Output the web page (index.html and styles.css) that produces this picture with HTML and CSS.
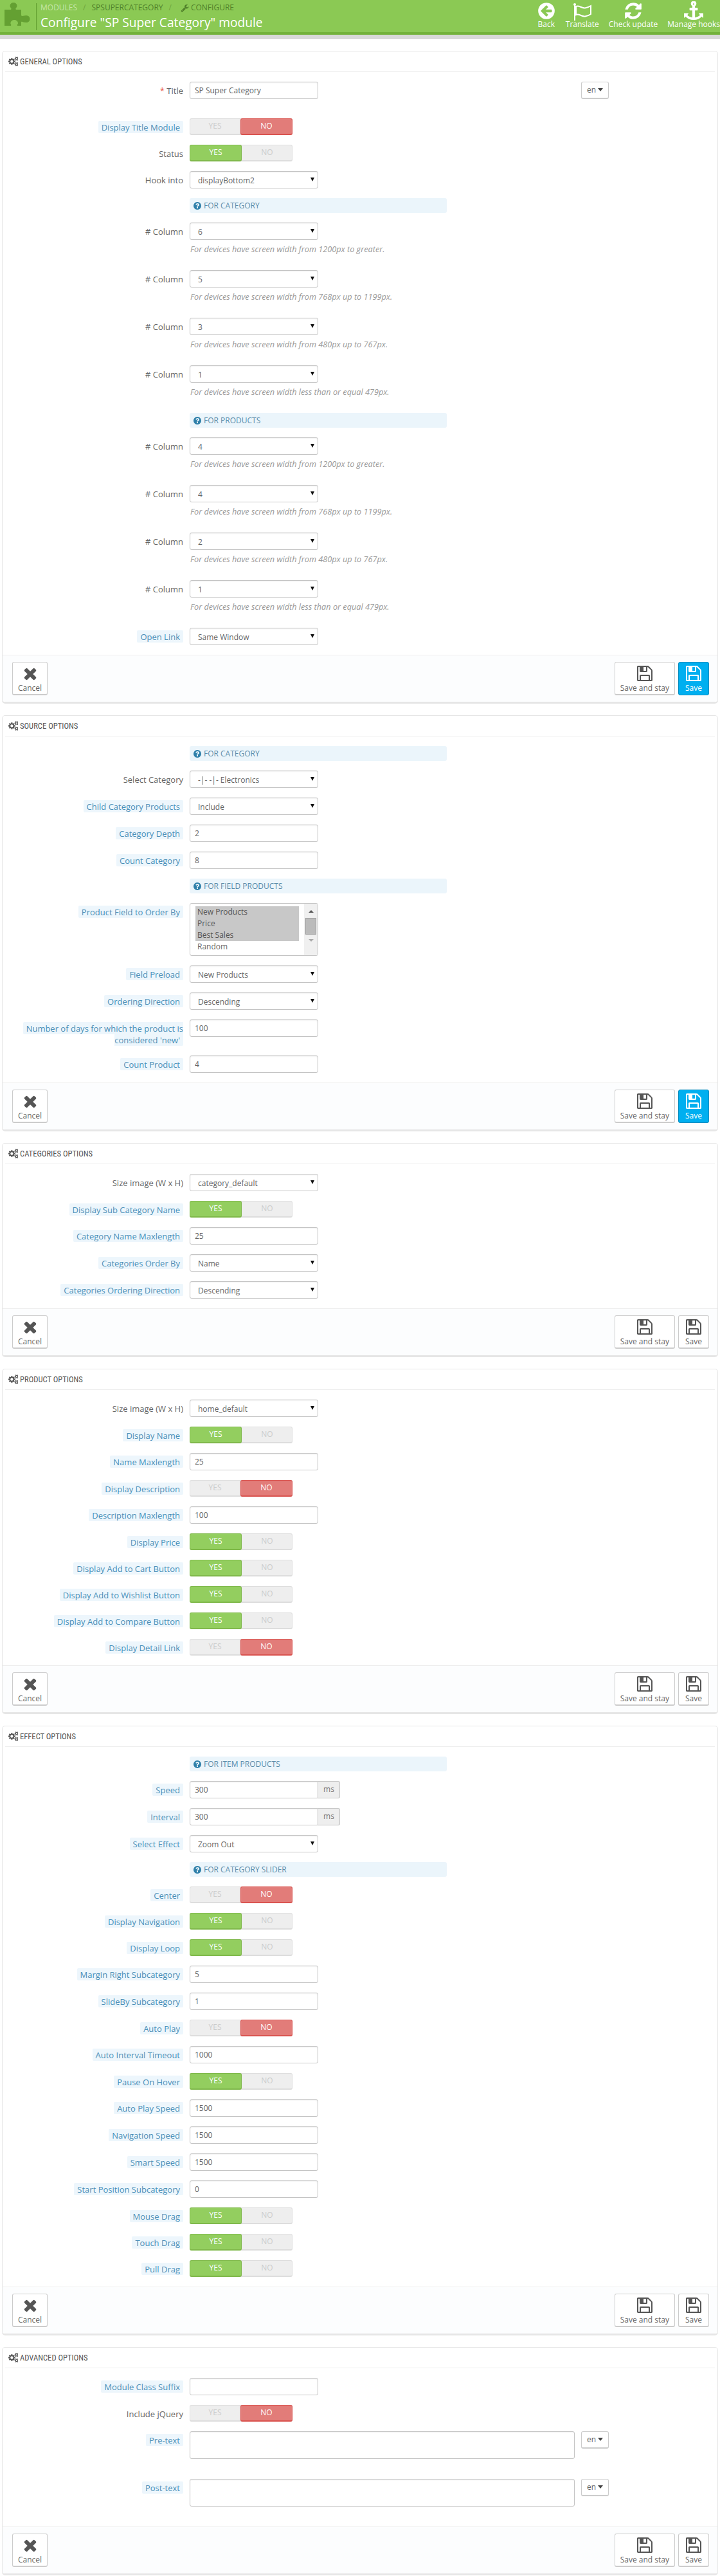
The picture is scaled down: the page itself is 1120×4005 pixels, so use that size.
FILE: index.html
```html
<!DOCTYPE html>
<html lang="en">
<head>
  <meta charset="UTF-8" />
  <meta name="viewport" content="width=device-width, initial-scale=1.0"/>
  <title>Configure "SP Super Category" module</title>
  <link rel="stylesheet" href="styles.css">
</head>
<body>

  <!-- Icon sprites -->
  <svg class="sprites" width="0" height="0">
    <symbol id="i-cogs" viewBox="0 0 1792 1792"><path d="M896 896q0-106-75-181t-181-75-181 75-75 181 75 181 181 75 181-75 75-181zm768 512q0-52-38-90t-90-38-90 38-38 90q0 53 37.5 90.5t90.5 37.5 90.5-37.5 37.5-90.5zm0-1024q0-52-38-90t-90-38-90 38-38 90q0 53 37.5 90.5t90.5 37.5 90.5-37.5 37.5-90.5zm-384 421v185q0 10-7 19.5t-16 10.5l-155 24q-11 35-32 76 34 48 90 115 7 11 7 20 0 12-7 19-23 30-82.5 89.5t-78.5 59.5q-11 0-21-7l-115-90q-37 19-77 31-11 108-23 155-7 24-30 24h-186q-11 0-20-7.5t-10-17.5l-23-153q-34-10-75-31l-118 89q-7 7-20 7-11 0-21-8-144-133-144-160 0-9 7-19 10-14 41-53t47-61q-23-44-35-82l-152-24q-10-1-17-9.5t-7-19.5v-185q0-10 7-19.5t16-10.5l155-24q11-35 32-76-34-48-90-115-7-11-7-20 0-12 7-20 22-30 82-89t79-59q11 0 21 7l115 90q34-18 77-32 11-108 23-154 7-24 30-24h186q11 0 20 7.5t10 17.5l23 153q34 10 75 31l118-89q8-7 20-7 11 0 21 8 144 133 144 160 0 8-7 19-12 16-42 54t-45 60q23 48 34 82l152 23q10 2 17 10.5t7 19.5zm640 533v140q0 16-149 31-12 27-30 52 51 113 51 138 0 4-4 7-122 71-124 71-8 0-46-47t-52-68q-20 2-30 2t-30-2q-14 21-52 68t-46 47q-2 0-124-71-4-3-4-7 0-25 51-138-18-25-30-52-149-15-149-31v-140q0-16 149-31 13-29 30-52-51-113-51-138 0-4 4-7 4-2 35-20t59-34 30-16q8 0 46 46.5t52 67.5q20-2 30-2t30 2q51-71 92-112l6-2q4 0 124 70 4 3 4 7 0 25-51 138 17 23 30 52 149 15 149 31zm0-1024v140q0 16-149 31-12 27-30 52 51 113 51 138 0 4-4 7-122 71-124 71-8 0-46-47t-52-68q-20 2-30 2t-30-2q-14 21-52 68t-46 47q-2 0-124-71-4-3-4-7 0-25 51-138-18-25-30-52-149-15-149-31v-140q0-16 149-31 13-29 30-52-51-113-51-138 0-4 4-7 4-2 35-20t59-34 30-16q8 0 46 46.5t52 67.5q20-2 30-2t30 2q51-71 92-112l6-2q4 0 124 70 4 3 4 7 0 25-51 138 17 23 30 52 149 15 149 31z"/></symbol>
    <symbol id="i-help" viewBox="0 0 1792 1792"><path d="M1024 1376v-192q0-14-9-23t-23-9h-192q-14 0-23 9t-9 23v192q0 14 9 23t23 9h192q14 0 23-9t9-23zm256-672q0-88-55.5-163t-138.5-116-170-41q-243 0-371 213-15 24 8 42l132 100q7 6 19 6 16 0 25-12 53-68 86-92 34-24 86-24 48 0 85.5 26t37.5 59q0 38-20 61t-68 45q-63 28-115.5 86.5t-52.5 125.5v36q0 14 9 23t23 9h192q14 0 23-9t9-23q0-19 21.5-49.5t54.5-49.5q32-18 49-28.5t46-35 44.5-48 28-60.5 12.5-81zm384 192q0 209-103 385.5t-279.5 279.5-385.5 103-385.5-103-279.5-279.5-103-385.5 103-385.5 279.5-279.5 385.5-103 385.5 103 279.5 279.5 103 385.5z"/></symbol>
    <symbol id="i-times" viewBox="0 0 1792 1792"><path d="M1490 1322q0 40-28 68l-136 136q-28 28-68 28t-68-28l-294-294-294 294q-28 28-68 28t-68-28l-136-136q-28-28-28-68t28-68l294-294-294-294q-28-28-28-68t28-68l136-136q28-28 68-28t68 28l294 294 294-294q28-28 68-28t68 28l136 136q28 28 28 68t-28 68l-294 294 294 294q28 28 28 68z"/></symbol>
    <symbol id="i-save" viewBox="0 0 1792 1792"><path d="M512 1536h768v-384h-768v384zm896 0h128v-896q0-14-10-38.5t-20-34.5l-281-281q-10-10-34-20t-39-10v416q0 40-28 68t-68 28h-576q-40 0-68-28t-28-68v-416h-128v1280h128v-416q0-40 28-68t68-28h832q40 0 68 28t28 68v416zm-384-928v-320q0-13-9.5-22.5t-22.5-9.5h-192q-13 0-22.5 9.5t-9.5 22.5v320q0 13 9.5 22.5t22.5 9.5h192q13 0 22.5-9.5t9.5-22.5zm640 32v928q0 40-28 68t-68 28h-1344q-40 0-68-28t-28-68v-1344q0-40 28-68t68-28h928q40 0 88 20t76 48l280 280q28 28 48 76t20 88z"/></symbol>
    <symbol id="i-back" viewBox="0 0 1792 1792"><path d="M1408 960v-128q0-26-19-45t-45-19h-502l189-189q19-19 19-45t-19-45l-91-91q-18-18-45-18t-45 18l-362 362-91 91q-18 18-18 45t18 45l91 91 362 362q18 18 45 18t45-18l91-91q18-18 18-45t-18-45l-189-189h502q26 0 45-19t19-45zm256-64q0 209-103 385.5t-279.5 279.5-385.5 103-385.5-103-279.5-279.5-103-385.5 103-385.5 279.5-279.5 385.5-103 385.5 103 279.5 279.5 103 385.5z"/></symbol>
    <symbol id="i-refresh" viewBox="0 0 1792 1792"><path d="M1639 1056q0 5-1 7-64 268-268 434.5t-478 166.5q-146 0-282.5-55t-243.5-157l-129 129q-19 19-45 19t-45-19-19-45v-448q0-26 19-45t45-19h448q26 0 45 19t19 45-19 45l-137 137q71 66 161 102t187 36q134 0 250-65t186-179q11-17 53-117 8-23 30-23h192q13 0 22.5 9.5t9.5 22.5zm25-800v448q0 26-19 45t-45 19h-448q-26 0-45-19t-19-45 19-45l138-138q-148-137-349-137-134 0-250 65t-186 179q-11 17-53 117-8 23-30 23h-199q-13 0-22.5-9.5t-9.5-22.5v-7q65-268 270-434.5t480-166.5q146 0 284 55.5t245 156.5l130-129q19-19 45-19t45 19 19 45z"/></symbol>
    <symbol id="i-anchor" viewBox="0 0 1792 1792"><path d="M960 256q0-26-19-45t-45-19-45 19-19 45 19 45 45 19 45-19 19-45zm832 888v352q0 22-20 30-8 2-12 2-12 0-23-9l-93-93q-119 143-318.5 226.5t-429.5 83.5-429.5-83.5-318.5-226.5l-93 93q-9 9-23 9-4 0-12-2-20-8-20-30v-352q0-14 9-23t23-9h352q22 0 30 20 8 19-7 35l-100 100q67 91 189.5 153.5t271.5 82.5v-647h-192q-26 0-45-19t-19-45v-128q0-26 19-45t45-19h192v-163q-58-34-93-92.5t-35-128.5q0-106 75-181t181-75 181 75 75 181q0 70-35 128.5t-93 92.5v163h192q26 0 45 19t19 45v128q0 26-19 45t-45 19h-192v647q149-20 271.5-82.5t189.5-153.5l-100-100q-15-16-7-35 8-20 30-20h352q14 0 23 9t9 23z"/></symbol>
    <symbol id="i-wrench" viewBox="0 0 1792 1792"><path d="M448 1472q0-26-19-45t-45-19-45 19-19 45 19 45 45 19 45-19 19-45zm644-420l-682 682q-37 37-90 37-52 0-91-37l-106-108q-38-36-38-90 0-53 38-91l681-681q39 98 114.5 173.5t173.5 114.5zm634-435q0 39-23 106-47 134-164.5 217.5t-258.5 83.5q-185 0-316.5-131.5t-131.5-316.5 131.5-316.5 316.5-131.5q58 0 121.5 16.5t107.5 46.5q16 11 16 28t-16 28l-293 169v224l193 107q5-3 79-48.5t135.5-81 70.5-35.5q15 0 23.5 10t8.5 25z"/></symbol>
  </svg>

  <!-- Page header -->
  <header class="page-head">
    <svg class="head-puzzle" width="50" height="46" viewBox="0 0 50 46"><path d="M7 15H17C19 13 15.500 12 15.500 9A5.500 5 0 0 1 26.500 9C26.500 12 23 13 25 15H33V24C35 26 36 24 41 24A5.500 5.500 0 0 1 41 35C36 35 35 33 33 34V40H27C26 38 28 38 28 36A5.800 5 0 0 0 16.400 36C16.400 38 18 38 17 40H7Z"/></svg>
    <div class="head-text">
      <div class="crumbs">
        <span class="crumb-first">Modules</span>
        <span class="crumb-sep">/</span>
        <span>spsupercategory</span>
        <span class="crumb-sep">/</span>
        <svg class="crumb-icon"><use href="#i-wrench"/></svg>
        <span>Configure</span>
      </div>
      <h1>Configure "SP Super Category" module</h1>
    </div>
    <nav class="toolbar">
      <a class="tool"><svg><use href="#i-back"/></svg>Back</a>
      <a class="tool">
        <svg viewBox="0 0 30 30"><circle cx="3" cy="5" r="2"/><rect x="2" y="5" width="2" height="25"/><path class="flag-line" d="M5 8C10 6 14 11 19 10.500C22 10 25 9 28 7V20C25 22 22 23 19 23.500C14 24 10 19 5 21Z"/></svg>
        Translate
      </a>
      <a class="tool"><svg><use href="#i-refresh"/></svg>Check update</a>
      <a class="tool"><svg><use href="#i-anchor"/></svg>Manage hooks</a>
    </nav>
  </header>

  <main class="content">

    <!-- General Options -->
    <section class="panel">
      <h3 class="panel-head"><svg><use href="#i-cogs"/></svg>General Options</h3>
      <div class="panel-body">
        <div class="row row-tall">
          <label class="lbl"><b>*</b> Title</label>
          <div class="lang-wrap"><input class="field" value="SP Super Category"></div>
          <button class="lang-btn">en<i></i></button>
        </div>
        <div class="row row-switch"><label class="lbl"><span>Display Title Module</span></label><div class="switch"><span>Yes</span><span class="no on">No</span></div></div>
        <div class="row row-switch"><label class="lbl">Status</label><div class="switch"><span class="yes on">Yes</span><span>No</span></div></div>
        <div class="row"><label class="lbl">Hook into</label><select class="pick"><option>displayBottom2</option></select></div>
        <div class="sub-head"><svg><use href="#i-help"/></svg>For Category</div>
        <div class="row"><label class="lbl"># Column</label><div><select class="pick"><option>6</option></select><p class="help">For devices have screen width from 1200px to greater.</p></div></div>
        <div class="row"><label class="lbl"># Column</label><div><select class="pick"><option>5</option></select><p class="help">For devices have screen width from 768px up to 1199px.</p></div></div>
        <div class="row"><label class="lbl"># Column</label><div><select class="pick"><option>3</option></select><p class="help">For devices have screen width from 480px up to 767px.</p></div></div>
        <div class="row"><label class="lbl"># Column</label><div><select class="pick"><option>1</option></select><p class="help">For devices have screen width less than or equal 479px.</p></div></div>
        <div class="sub-head"><svg><use href="#i-help"/></svg>For Products</div>
        <div class="row"><label class="lbl"># Column</label><div><select class="pick"><option>4</option></select><p class="help">For devices have screen width from 1200px to greater.</p></div></div>
        <div class="row"><label class="lbl"># Column</label><div><select class="pick"><option>4</option></select><p class="help">For devices have screen width from 768px up to 1199px.</p></div></div>
        <div class="row"><label class="lbl"># Column</label><div><select class="pick"><option>2</option></select><p class="help">For devices have screen width from 480px up to 767px.</p></div></div>
        <div class="row"><label class="lbl"># Column</label><div><select class="pick"><option>1</option></select><p class="help">For devices have screen width less than or equal 479px.</p></div></div>
        <div class="row"><label class="lbl"><span>Open Link</span></label><select class="pick"><option>Same Window</option></select></div>
      </div>
      <footer class="panel-foot">
        <button class="btn"><svg class="ic-times"><use href="#i-times"/></svg>Cancel</button>
        <div class="foot-right">
          <button class="btn"><svg><use href="#i-save"/></svg>Save and stay</button>
          <button class="btn btn-blue"><svg><use href="#i-save"/></svg>Save</button>
        </div>
      </footer>
    </section>

    <!-- Source Options -->
    <section class="panel">
      <h3 class="panel-head"><svg><use href="#i-cogs"/></svg>Source Options</h3>
      <div class="panel-body">
        <div class="sub-head"><svg><use href="#i-help"/></svg>For Category</div>
        <div class="row"><label class="lbl">Select Category</label><select class="pick"><option>-|- -|- Electronics</option></select></div>
        <div class="row"><label class="lbl"><span>Child Category Products</span></label><select class="pick"><option>Include</option></select></div>
        <div class="row"><label class="lbl"><span>Category Depth</span></label><input class="field" value="2"></div>
        <div class="row"><label class="lbl"><span>Count Category</span></label><input class="field" value="8"></div>
        <div class="sub-head"><svg><use href="#i-help"/></svg>For Field Products</div>
        <div class="row">
          <label class="lbl"><span>Product Field to Order By</span></label>
          <div class="listbox">
            <ul>
              <li class="sel">New Products</li>
              <li class="sel">Price</li>
              <li class="sel">Best Sales</li>
              <li>Random</li>
            </ul>
            <div class="scroll"><i class="up"></i><b></b><i class="down"></i></div>
          </div>
        </div>
        <div class="row"><label class="lbl"><span>Field Preload</span></label><select class="pick"><option>New Products</option></select></div>
        <div class="row"><label class="lbl"><span>Ordering Direction</span></label><select class="pick"><option>Descending</option></select></div>
        <div class="row row-wrap"><label class="lbl"><span>Number of days for which the product is considered 'new'</span></label><input class="field" value="100"></div>
        <div class="row"><label class="lbl"><span>Count Product</span></label><input class="field" value="4"></div>
      </div>
      <footer class="panel-foot">
        <button class="btn"><svg class="ic-times"><use href="#i-times"/></svg>Cancel</button>
        <div class="foot-right">
          <button class="btn"><svg><use href="#i-save"/></svg>Save and stay</button>
          <button class="btn btn-blue"><svg><use href="#i-save"/></svg>Save</button>
        </div>
      </footer>
    </section>

    <!-- Categories Options -->
    <section class="panel">
      <h3 class="panel-head"><svg><use href="#i-cogs"/></svg>Categories Options</h3>
      <div class="panel-body">
        <div class="row"><label class="lbl">Size image (W x H)</label><select class="pick"><option>category_default</option></select></div>
        <div class="row row-switch"><label class="lbl"><span>Display Sub Category Name</span></label><div class="switch"><span class="yes on">Yes</span><span>No</span></div></div>
        <div class="row"><label class="lbl"><span>Category Name Maxlength</span></label><input class="field" value="25"></div>
        <div class="row"><label class="lbl"><span>Categories Order By</span></label><select class="pick"><option>Name</option></select></div>
        <div class="row"><label class="lbl"><span>Categories Ordering Direction</span></label><select class="pick"><option>Descending</option></select></div>
      </div>
      <footer class="panel-foot">
        <button class="btn"><svg class="ic-times"><use href="#i-times"/></svg>Cancel</button>
        <div class="foot-right">
          <button class="btn"><svg><use href="#i-save"/></svg>Save and stay</button>
          <button class="btn"><svg><use href="#i-save"/></svg>Save</button>
        </div>
      </footer>
    </section>

    <!-- Product Options -->
    <section class="panel">
      <h3 class="panel-head"><svg><use href="#i-cogs"/></svg>Product Options</h3>
      <div class="panel-body">
        <div class="row"><label class="lbl">Size image (W x H)</label><select class="pick"><option>home_default</option></select></div>
        <div class="row row-switch"><label class="lbl"><span>Display Name</span></label><div class="switch"><span class="yes on">Yes</span><span>No</span></div></div>
        <div class="row"><label class="lbl"><span>Name Maxlength</span></label><input class="field" value="25"></div>
        <div class="row row-switch"><label class="lbl"><span>Display Description</span></label><div class="switch"><span>Yes</span><span class="no on">No</span></div></div>
        <div class="row"><label class="lbl"><span>Description Maxlength</span></label><input class="field" value="100"></div>
        <div class="row row-switch"><label class="lbl"><span>Display Price</span></label><div class="switch"><span class="yes on">Yes</span><span>No</span></div></div>
        <div class="row row-switch"><label class="lbl"><span>Display Add to Cart Button</span></label><div class="switch"><span class="yes on">Yes</span><span>No</span></div></div>
        <div class="row row-switch"><label class="lbl"><span>Display Add to Wishlist Button</span></label><div class="switch"><span class="yes on">Yes</span><span>No</span></div></div>
        <div class="row row-switch"><label class="lbl"><span>Display Add to Compare Button</span></label><div class="switch"><span class="yes on">Yes</span><span>No</span></div></div>
        <div class="row row-switch"><label class="lbl"><span>Display Detail Link</span></label><div class="switch"><span>Yes</span><span class="no on">No</span></div></div>
      </div>
      <footer class="panel-foot">
        <button class="btn"><svg class="ic-times"><use href="#i-times"/></svg>Cancel</button>
        <div class="foot-right">
          <button class="btn"><svg><use href="#i-save"/></svg>Save and stay</button>
          <button class="btn"><svg><use href="#i-save"/></svg>Save</button>
        </div>
      </footer>
    </section>

    <!-- Effect Options -->
    <section class="panel">
      <h3 class="panel-head"><svg><use href="#i-cogs"/></svg>Effect Options</h3>
      <div class="panel-body">
        <div class="sub-head"><svg><use href="#i-help"/></svg>For Item Products</div>
        <div class="row"><label class="lbl"><span>Speed</span></label><div class="input-group"><input class="field" value="300"><span class="addon">ms</span></div></div>
        <div class="row"><label class="lbl"><span>Interval</span></label><div class="input-group"><input class="field" value="300"><span class="addon">ms</span></div></div>
        <div class="row"><label class="lbl"><span>Select Effect</span></label><select class="pick"><option>Zoom Out</option></select></div>
        <div class="sub-head"><svg><use href="#i-help"/></svg>For Category Slider</div>
        <div class="row row-switch"><label class="lbl"><span>Center</span></label><div class="switch"><span>Yes</span><span class="no on">No</span></div></div>
        <div class="row row-switch"><label class="lbl"><span>Display Navigation</span></label><div class="switch"><span class="yes on">Yes</span><span>No</span></div></div>
        <div class="row row-switch"><label class="lbl"><span>Display Loop</span></label><div class="switch"><span class="yes on">Yes</span><span>No</span></div></div>
        <div class="row"><label class="lbl"><span>Margin Right Subcategory</span></label><input class="field" value="5"></div>
        <div class="row"><label class="lbl"><span>SlideBy Subcategory</span></label><input class="field" value="1"></div>
        <div class="row row-switch"><label class="lbl"><span>Auto Play</span></label><div class="switch"><span>Yes</span><span class="no on">No</span></div></div>
        <div class="row"><label class="lbl"><span>Auto Interval Timeout</span></label><input class="field" value="1000"></div>
        <div class="row row-switch"><label class="lbl"><span>Pause On Hover</span></label><div class="switch"><span class="yes on">Yes</span><span>No</span></div></div>
        <div class="row"><label class="lbl"><span>Auto Play Speed</span></label><input class="field" value="1500"></div>
        <div class="row"><label class="lbl"><span>Navigation Speed</span></label><input class="field" value="1500"></div>
        <div class="row"><label class="lbl"><span>Smart Speed</span></label><input class="field" value="1500"></div>
        <div class="row"><label class="lbl"><span>Start Position Subcategory</span></label><input class="field" value="0"></div>
        <div class="row row-switch"><label class="lbl"><span>Mouse Drag</span></label><div class="switch"><span class="yes on">Yes</span><span>No</span></div></div>
        <div class="row row-switch"><label class="lbl"><span>Touch Drag</span></label><div class="switch"><span class="yes on">Yes</span><span>No</span></div></div>
        <div class="row row-switch"><label class="lbl"><span>Pull Drag</span></label><div class="switch"><span class="yes on">Yes</span><span>No</span></div></div>
      </div>
      <footer class="panel-foot">
        <button class="btn"><svg class="ic-times"><use href="#i-times"/></svg>Cancel</button>
        <div class="foot-right">
          <button class="btn"><svg><use href="#i-save"/></svg>Save and stay</button>
          <button class="btn"><svg><use href="#i-save"/></svg>Save</button>
        </div>
      </footer>
    </section>

    <!-- Advanced Options -->
    <section class="panel">
      <h3 class="panel-head"><svg><use href="#i-cogs"/></svg>Advanced Options</h3>
      <div class="panel-body">
        <div class="row"><label class="lbl"><span>Module Class Suffix</span></label><input class="field"></div>
        <div class="row row-switch"><label class="lbl">Include jQuery</label><div class="switch"><span>Yes</span><span class="no on">No</span></div></div>
        <div class="row row-text"><label class="lbl"><span>Pre-text</span></label><textarea class="area"></textarea><button class="lang-btn">en<i></i></button></div>
        <div class="row row-text"><label class="lbl"><span>Post-text</span></label><textarea class="area"></textarea><button class="lang-btn">en<i></i></button></div>
      </div>
      <footer class="panel-foot">
        <button class="btn"><svg class="ic-times"><use href="#i-times"/></svg>Cancel</button>
        <div class="foot-right">
          <button class="btn"><svg><use href="#i-save"/></svg>Save and stay</button>
          <button class="btn"><svg><use href="#i-save"/></svg>Save</button>
        </div>
      </footer>
    </section>

  </main>
</body>
</html>
```

FILE: styles.css
```css
* {
  box-sizing: border-box;
}

body {
  font-family: "Open Sans", sans-serif;
  font-size: 12px;
  line-height: 18px;
  margin: 0;
  background-color: #fff;
  color: #666;
}

.sprites {
  position: absolute;
}

/* Page header */
.page-head {
  display: flex;
  height: 61px;
  background-color: #8bc954;
  border-bottom: 7px solid #d8d8d8;
  box-shadow: inset 0 -4px 0 #72b13a;
}

.head-puzzle {
  flex: none;
  width: 50px;
  height: 46px;
  fill: #64a032;
}

.head-text {
  margin: 5px 0 0 6px;
  padding-left: 6px;
  height: 42px;
  border-left: 1px solid #64a032;
}

.crumbs {
  display: flex;
  align-items: center;
  height: 16px;
  margin-top: -1px;
  text-transform: uppercase;
  color: #50802a;
  white-space: nowrap;
}

.crumb-first {
  color: #c8e6aa;
}

.crumb-sep {
  margin: 0 9px;
  color: #6ea43c;
}

.crumb-icon {
  width: 13px;
  height: 13px;
  margin: 0 3px 0 5px;
  fill: #50802a;
}

h1 {
  margin: 2px 0 0;
  font-size: 19.2px;
  line-height: 26px;
  font-weight: 400;
  color: #fff;
  white-space: nowrap;
}

.toolbar {
  display: flex;
  margin-left: auto;
  gap: 15px;
}

.tool {
  display: flex;
  flex-direction: column;
  align-items: center;
  padding-top: 2px;
  color: #fff;
  white-space: nowrap;
}

.tool svg {
  width: 30px;
  height: 30px;
  margin-bottom: -3px;
  fill: #fff;
}

.tool .flag-line {
  fill: none;
  stroke: #fff;
  stroke-width: 2;
}

/* Panels */
.content {
  padding: 18px 3px 0;
}

.panel {
  margin-bottom: 18px;
  background-color: #fff;
  border: 1px solid #e6e6e6;
  border-bottom-width: 3px;
  border-radius: 5px;
}

.panel-head {
  display: flex;
  align-items: center;
  height: 32px;
  margin: 0 4px;
  padding-left: 5px;
  border-bottom: 1px solid #eee;
  font-family: "Roboto Condensed", "Open Sans", sans-serif;
  font-size: 12.6px;
  font-weight: 400;
  text-transform: uppercase;
  color: #555;
}

.panel-head svg {
  width: 15px;
  height: 15px;
  margin-right: 3px;
  fill: #555;
}

.panel-body {
  padding-top: 15px;
}

.panel-foot {
  display: flex;
  justify-content: space-between;
  padding: 10px 13px 10px 15px;
  background-color: #fcfdfe;
  border-top: 1px solid #eee;
  border-radius: 0 0 5px 5px;
}

.foot-right {
  display: flex;
  gap: 5px;
}

/* Footer buttons */
.btn {
  display: flex;
  flex-direction: column;
  align-items: center;
  height: 52px;
  min-width: 48px;
  padding: 3px 8px 0;
  background-color: #fff;
  border: 1px solid #ccc;
  border-bottom-width: 2px;
  border-radius: 3px;
  font-family: inherit;
  font-size: 12px;
  line-height: 18px;
  color: #666;
  white-space: nowrap;
}

.btn svg {
  width: 28px;
  height: 28px;
  fill: #555;
}

.btn-blue {
  background-color: #00aff0;
  border-color: #008abd;
  border-bottom-width: 1px;
  color: #fff;
}

.btn-blue svg {
  fill: #fff;
}

/* Form rows */
.row {
  display: flex;
  align-items: flex-start;
  margin-bottom: 15px;
}

.row-tall {
  margin-bottom: 30px;
}

.row-text {
  margin-bottom: 31px;
}

.row-wrap {
  height: 41px;
}

.lbl {
  flex: none;
  width: 281px;
  margin-right: 10px;
  padding-top: 5px;
  font-size: 13px;
  text-align: right;
  color: #666;
}

.lbl b {
  font-weight: 400;
  color: #e74c3c;
}

.lbl span {
  padding: 1px 5px 0;
  background-color: #edf6fc;
  border-radius: 2px;
  color: #4a8fb8;
}

.field,
.pick,
.area {
  display: block;
  width: 200px;
  height: 27px;
  background-color: #fff;
  border: 1px solid #c4c4c4;
  border-radius: 3px;
  box-shadow: inset 0 1px 2px rgba(0, 0, 0, 0.06);
  font-family: inherit;
  font-size: 12px;
  color: #666;
}

.field {
  padding: 0 7px;
}

.pick {
  padding: 2px 0 0 12px;
  appearance: none;
  background-image: url("data:image/svg+xml,%3Csvg xmlns='http://www.w3.org/2000/svg' width='6' height='6'%3E%3Cpath d='M0 0h6L3 6z' fill='%23111'/%3E%3C/svg%3E");
  background-repeat: no-repeat;
  background-position: 187px 9px;
}

.area {
  width: 599px;
  height: 43px;
  resize: none;
}

.help {
  margin: 5px 0 9px;
  padding-left: 1px;
  font-size: 12.7px;
  font-style: italic;
  color: #999;
  white-space: nowrap;
}

.sub-head {
  display: flex;
  align-items: center;
  width: 400px;
  height: 23px;
  margin: 0 0 15px 291px;
  padding-left: 5px;
  background-color: #ebf5fb;
  border-radius: 3px;
  text-transform: uppercase;
  color: #5a8caa;
}

.sub-head svg {
  width: 14px;
  height: 14px;
  margin-right: 3px;
  fill: #2f80aa;
}

/* Toggle */
.switch {
  display: flex;
  width: 160px;
  height: 26px;
  background-color: #eee;
  border: 1px solid #ddd;
  border-bottom-width: 2px;
  border-radius: 3px;
  text-transform: uppercase;
  color: #ccc;
}

.switch span {
  flex: 1;
  margin: -1px 0 -2px;
  padding-top: 3px;
  text-align: center;
}

.switch span:first-child {
  margin-left: -1px;
}

.switch span:last-child {
  margin-right: -1px;
}

.switch .on {
  border: 1px solid;
  border-bottom-width: 2px;
  border-radius: 3px;
  padding-top: 2px;
  color: #fff;
}

.switch .yes {
  background-color: #93ce5f;
  border-color: #7fb84a;
}

.switch .no {
  background-color: #e27c79;
  border-color: #d9534f;
}

/* Language button */
.lang-wrap {
  width: 599px;
}

.lang-btn {
  width: 43px;
  height: 27px;
  margin-left: 10px;
  padding: 0 0 1px;
  background-color: #fff;
  border: 1px solid #ccc;
  border-bottom-width: 2px;
  border-radius: 3px;
  font-family: inherit;
  font-size: 12px;
  color: #666;
}

.lang-btn i {
  display: inline-block;
  margin-left: 3px;
  vertical-align: 2px;
  border-top: 5px solid #444;
  border-left: 4px solid transparent;
  border-right: 4px solid transparent;
}

/* Input with addon */
.input-group {
  display: flex;
  width: 234px;
}

.input-group .field {
  flex: none;
  border-radius: 3px 0 0 3px;
}

.addon {
  flex: 1;
  height: 27px;
  padding-top: 3px;
  background-color: #eee;
  border: 1px solid #c4c4c4;
  border-left: none;
  border-radius: 0 3px 3px 0;
  text-align: center;
  color: #777;
}

/* Multi select list */
.listbox {
  display: flex;
  justify-content: space-between;
  width: 200px;
  height: 82px;
  background-color: #fff;
  border: 1px solid #c4c4c4;
  border-radius: 3px;
  overflow: hidden;
}

.listbox ul {
  width: 161px;
  margin: 4px 0 0 8px;
  padding: 0;
  list-style: none;
}

.listbox li {
  height: 18px;
  padding-left: 3px;
}

.listbox .sel {
  background-color: #c8c8c8;
  color: #555;
}

.scroll {
  display: flex;
  flex-direction: column;
  align-items: center;
  width: 21px;
  background-color: #f0f0f0;
}

.scroll i {
  border-left: 4px solid transparent;
  border-right: 4px solid transparent;
}

.scroll .up {
  margin-top: 10px;
  border-bottom: 4px solid #555;
}

.scroll .down {
  margin-top: 7px;
  border-top: 4px solid #aaa;
}

.scroll b {
  width: 17px;
  height: 26px;
  margin-top: 8px;
  background-color: #bbb;
  border: 1px solid #999;
}
```
